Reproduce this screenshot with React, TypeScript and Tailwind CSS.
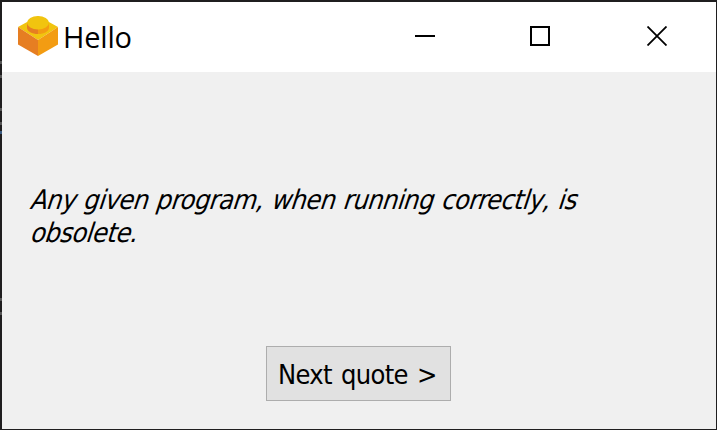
const edgeMarks = [
  'mt-[59px] bg-[#555555]',
  'mt-[11px] bg-[#555555]',
  'mt-[30px] bg-[#555555]',
  'mt-[11px] bg-[#555555]',
  'mt-[6px] bg-[#3a5a80]',
  'mt-[164px] bg-[#555555]',
  'mt-[11px] bg-[#555555]',
];

function BrickIcon() {
  return (
    <svg className="h-10 w-10 shrink-0" viewBox="0 0 40 40">
      <path d="M0 11 20 0 40 11 20 24Z" fill="#f1c40f" />
      <path d="M0 11 20 24V40L0 28.500Z" fill="#e67e22" />
      <path d="M40 11 20 24V40L40 28.500Z" fill="#f39c12" />
      <path d="M9 7V11.500C9 15.500 14 18 20 18V7Z" fill="#e67e22" />
      <path d="M31 7V11.500C31 15.500 26 18 20 18V7Z" fill="#f39c12" />
      <ellipse cx="20" cy="6.700" rx="11" ry="6.700" fill="#f1c40f" />
    </svg>
  );
}

function TitleBar() {
  return (
    <header className="flex h-[70px] shrink-0 items-start bg-white">
      <div className="flex h-[68px] items-center pl-4">
        <BrickIcon />
        <span className="ml-[5px] pt-px font-['Open_Sans',sans-serif] text-[29px] leading-10 tracking-[-0.2px]">Hello</span>
      </div>
      <div className="ml-auto flex h-[68px] items-center pr-[49px] text-black">
        <button aria-label="Minimize" className="mr-[95px] h-5 w-5">
          <svg viewBox="0 0 20 20" className="h-5 w-5"><path d="M0 10H20" stroke="currentColor" strokeWidth="2" /></svg>
        </button>
        <button aria-label="Maximize" className="mr-[97px] h-5 w-5 border-2 border-black" />
        <button aria-label="Close" className="h-5 w-5">
          <svg viewBox="0 0 20 20" className="h-5 w-5"><path d="M.5.5 19.500 19.500M19.500.5.5 19.500" stroke="currentColor" strokeWidth="1.800" /></svg>
        </button>
      </div>
    </header>
  );
}

export default function App() {
  return (
    <div className="flex h-[430px] w-[717px] overflow-hidden bg-[#1f1e1f] pt-[2px] pb-px pr-px text-black">
      <div className="w-[2px] shrink-0">
        {edgeMarks.map((mark, i) => <div key={i} className={`h-[3px] ${mark}`} />)}
      </div>
      <main className="flex h-[427px] w-[714px] flex-col bg-[#f0f0f0]">
        <TitleBar />
        <p className="mt-[111px] ml-[25px] font-['DejaVu_Sans_Condensed','DejaVu_Sans',sans-serif] text-[27px] leading-[33px] tracking-[-0.55px] [word-spacing:1.2px]">
          <span className="block w-max origin-bottom-left -skew-x-[18deg]">Any given program, when running correctly, is</span>
          <span className="block w-max origin-bottom-left -skew-x-[18deg]">obsolete.</span>
        </p>
        <button className="mt-[97px] ml-[264px] flex h-[55px] w-[185px] items-center border border-[#adadad] bg-[#e1e1e1] pt-[2px] pl-[11px] font-['DejaVu_Sans_Condensed','DejaVu_Sans',sans-serif] text-[27px] leading-[33px] tracking-[-0.65px] whitespace-nowrap [word-spacing:2px]">
          Next quote &gt;
        </button>
      </main>
    </div>
  );
}
